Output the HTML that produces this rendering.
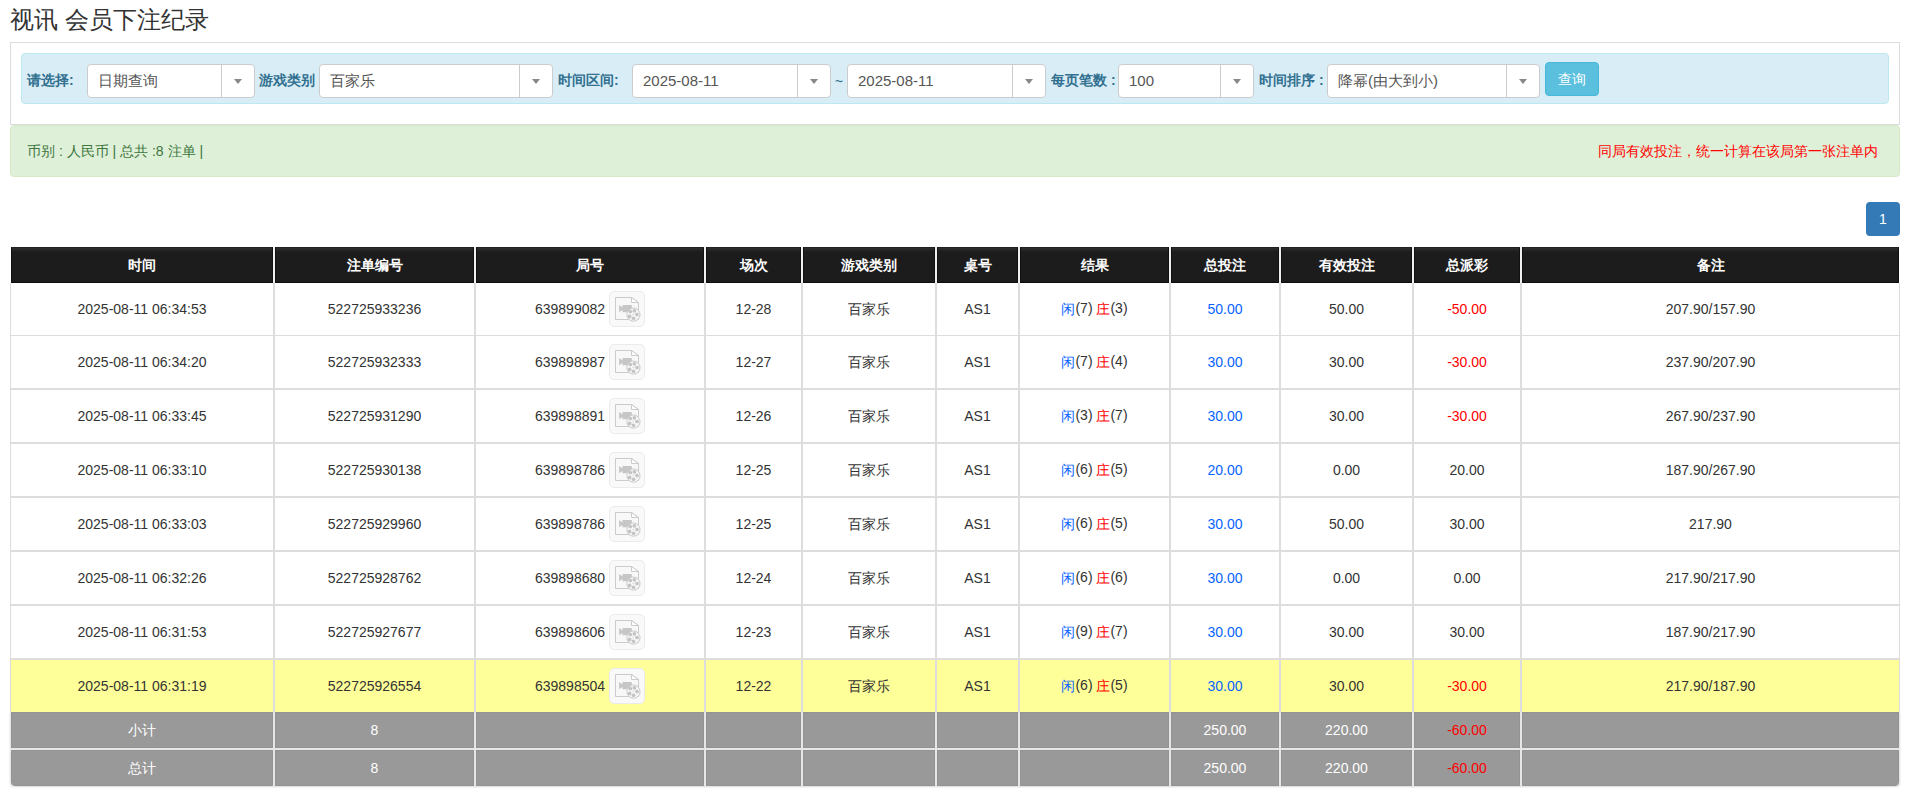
<!DOCTYPE html>
<html><head><meta charset="utf-8"><title>视讯 会员下注纪录</title>
<style>
*{box-sizing:border-box;}
html,body{margin:0;padding:0;background:#fff;}
body{font-family:"Liberation Sans",sans-serif;color:#333;font-size:14px;width:1914px;height:804px;position:relative;overflow:hidden;}
.ab{position:absolute;}
.title{left:10px;top:6px;font-size:24px;line-height:28px;color:#333;white-space:nowrap;}
.panel{left:10px;top:42px;width:1890px;height:83px;border:1px solid #ddd;background:#fff;}
.info{left:21px;top:53px;width:1868px;height:51px;border:1px solid #bce8f1;background:#d9edf7;border-radius:4px;}
.lbl{top:72px;font-size:14px;line-height:16px;font-weight:bold;color:#31708f;white-space:nowrap;}
.sel{top:64px;height:34px;border:1px solid #ccc;border-radius:4px;background:#fff;}
.sel .tx{position:absolute;left:10px;top:7px;font-size:15px;line-height:18px;color:#555;white-space:nowrap;}
.sel .dv{position:absolute;right:32px;top:0;bottom:0;width:1px;background:#ccc;}
.sel .ar{position:absolute;right:12px;top:14px;width:0;height:0;border-left:4px solid transparent;border-right:4px solid transparent;border-top:5px solid #888;}
.btn{left:1545px;top:62px;width:54px;height:34px;background:#5bc0de;border:1px solid #46b8da;border-radius:4px;color:#fff;font-size:14px;line-height:32px;text-align:center;}
.succ{left:10px;top:125px;width:1890px;height:52px;border:1px solid #d6e9c6;background:#dff0d8;border-radius:4px;}
.stx{top:142px;font-size:14px;line-height:18px;white-space:nowrap;}
.page{left:1866px;top:202px;width:34px;height:34px;background:#337ab7;border-radius:4px;color:#fff;font-size:14px;line-height:34px;text-align:center;}
.c{position:absolute;display:flex;align-items:center;justify-content:center;white-space:nowrap;font-size:14px;}
.hd{background:#1c1c1c;border:1px solid #111;border-top-color:#222;border-bottom-color:#0c0c0c;color:#fff;font-weight:bold;}
.hd:before{content:"";position:absolute;left:0;right:0;top:0;height:4px;background:linear-gradient(#2e2e2e,#1c1c1c);}
.hd span{position:relative;top:1px;}
.w{background:#fff;}
.y{background:#ffff99;}
.g{background:#999;border:1px solid #939393;color:#fff;}
.g .cj{position:relative;top:1px;}
.num{position:relative;top:1px;}
.bl{color:#0864ff;}
.rd{color:#ff0000;}
.cjb{position:relative;top:1px;}
.ico{display:inline-block;vertical-align:middle;width:36px;height:36px;margin-left:4px;border:1px solid #ebebeb;border-radius:5px;background:#f9f9f9;position:relative;}
.ico svg{position:absolute;left:-1px;top:-1px;}
</style></head><body>

<div class="ab title">视讯 会员下注纪录</div>
<div class="ab panel"></div>
<div class="ab info"></div>
<div class="ab lbl" style="left:27px">请选择:</div>
<div class="ab lbl" style="left:259px">游戏类别</div>
<div class="ab lbl" style="left:558px">时间区间:</div>
<div class="ab lbl" style="left:1051px">每页笔数 :</div>
<div class="ab lbl" style="left:1259px">时间排序 :</div>
<div class="ab lbl" style="left:835px;top:74px;font-size:17px;font-weight:normal;transform:scaleX(0.8);transform-origin:left">~</div>
<div class="ab sel" style="left:87px;width:168px"><div class="tx">日期查询</div><div class="dv"></div><div class="ar"></div></div>
<div class="ab sel" style="left:319px;width:234px"><div class="tx">百家乐</div><div class="dv"></div><div class="ar"></div></div>
<div class="ab sel" style="left:632px;width:199px"><div class="tx">2025-08-11</div><div class="dv"></div><div class="ar"></div></div>
<div class="ab sel" style="left:847px;width:199px"><div class="tx">2025-08-11</div><div class="dv"></div><div class="ar"></div></div>
<div class="ab sel" style="left:1118px;width:136px"><div class="tx">100</div><div class="dv"></div><div class="ar"></div></div>
<div class="ab sel" style="left:1327px;width:213px"><div class="tx">降幂(由大到小)</div><div class="dv"></div><div class="ar"></div></div>
<div class="ab btn">查询</div>
<div class="ab succ"></div>
<div class="ab stx" style="left:27px;color:#3c763d">币别 : 人民币 | 总共 :8 注单 |</div>
<div class="ab stx" style="right:36px;color:#ff0000">同局有效投注，统一计算在该局第一张注单内</div>
<div class="ab page">1</div>
<div class="ab" style="left:11px;top:247px;width:1888px;height:36px;background:#f0f0f0"></div>
<div class="c hd" style="left:11px;top:247px;width:262px;height:36px"><span>时间</span></div>
<div class="c hd" style="left:275px;top:247px;width:199px;height:36px"><span>注单编号</span></div>
<div class="c hd" style="left:476px;top:247px;width:228px;height:36px"><span>局号</span></div>
<div class="c hd" style="left:706px;top:247px;width:95px;height:36px"><span>场次</span></div>
<div class="c hd" style="left:803px;top:247px;width:132px;height:36px"><span>游戏类别</span></div>
<div class="c hd" style="left:937px;top:247px;width:81px;height:36px"><span>桌号</span></div>
<div class="c hd" style="left:1020px;top:247px;width:149px;height:36px"><span>结果</span></div>
<div class="c hd" style="left:1171px;top:247px;width:108px;height:36px"><span>总投注</span></div>
<div class="c hd" style="left:1281px;top:247px;width:131px;height:36px"><span>有效投注</span></div>
<div class="c hd" style="left:1414px;top:247px;width:106px;height:36px"><span>总派彩</span></div>
<div class="c hd" style="left:1522px;top:247px;width:377px;height:36px"><span>备注</span></div>
<div class="ab" style="left:10px;top:283px;width:1890px;height:429px;background:#ddd"></div>
<div class="c w" style="left:11px;top:283px;width:262px;height:52px"><span>2025-08-11 06:34:53</span></div>
<div class="c w" style="left:275px;top:283px;width:199px;height:52px"><span>522725933236</span></div>
<div class="c w" style="left:476px;top:283px;width:228px;height:52px"><span><span class="num">639899082</span><span class="ico"><svg width="36" height="36" viewBox="0 0 36 36"><path d="M6.5 28.5V6.5H22.5L29.5 11.5V28.5Z" fill="#f8f8f8" stroke="#cbcbcb" stroke-width="1"/><path d="M22.5 6.5V11.5H29.5Z" fill="#fff" stroke="#cbcbcb" stroke-width="1" stroke-linejoin="miter"/><path d="M10.1 14L13.45 16.4V14H22.8V21.3H13.45V19L10.1 21.3Z" fill="#c6c6c6"/><circle cx="24.45" cy="23.6" r="6.6" fill="#f6f6f6" stroke="#cbcbcb" stroke-width="1"/><circle cx="21.3" cy="20.5" r="1.85" fill="#c4c4c4"/><circle cx="25.4" cy="19.8" r="1.85" fill="#c4c4c4"/><circle cx="28" cy="23.5" r="1.85" fill="#c4c4c4"/><circle cx="24.5" cy="27.25" r="1.85" fill="#c4c4c4"/><circle cx="20.6" cy="25.4" r="1.85" fill="#c4c4c4"/><circle cx="24.1" cy="23.3" r="0.6" fill="#c6c6c6"/></svg></span></span></div>
<div class="c w" style="left:706px;top:283px;width:95px;height:52px"><span>12-28</span></div>
<div class="c w" style="left:803px;top:283px;width:132px;height:52px"><span><span class="cjb">百家乐</span></span></div>
<div class="c w" style="left:937px;top:283px;width:81px;height:52px"><span>AS1</span></div>
<div class="c w" style="left:1020px;top:283px;width:149px;height:52px"><span><span class="bl cjb">闲</span>(7) <span class="rd cjb">庄</span>(3)</span></div>
<div class="c w" style="left:1171px;top:283px;width:108px;height:52px"><span><span class="bl">50.00</span></span></div>
<div class="c w" style="left:1281px;top:283px;width:131px;height:52px"><span>50.00</span></div>
<div class="c w" style="left:1414px;top:283px;width:106px;height:52px"><span><span class="rd">-50.00</span></span></div>
<div class="c w" style="left:1522px;top:283px;width:377px;height:52px"><span>207.90/157.90</span></div>
<div class="c w" style="left:11px;top:336px;width:262px;height:52px"><span>2025-08-11 06:34:20</span></div>
<div class="c w" style="left:275px;top:336px;width:199px;height:52px"><span>522725932333</span></div>
<div class="c w" style="left:476px;top:336px;width:228px;height:52px"><span><span class="num">639898987</span><span class="ico"><svg width="36" height="36" viewBox="0 0 36 36"><path d="M6.5 28.5V6.5H22.5L29.5 11.5V28.5Z" fill="#f8f8f8" stroke="#cbcbcb" stroke-width="1"/><path d="M22.5 6.5V11.5H29.5Z" fill="#fff" stroke="#cbcbcb" stroke-width="1" stroke-linejoin="miter"/><path d="M10.1 14L13.45 16.4V14H22.8V21.3H13.45V19L10.1 21.3Z" fill="#c6c6c6"/><circle cx="24.45" cy="23.6" r="6.6" fill="#f6f6f6" stroke="#cbcbcb" stroke-width="1"/><circle cx="21.3" cy="20.5" r="1.85" fill="#c4c4c4"/><circle cx="25.4" cy="19.8" r="1.85" fill="#c4c4c4"/><circle cx="28" cy="23.5" r="1.85" fill="#c4c4c4"/><circle cx="24.5" cy="27.25" r="1.85" fill="#c4c4c4"/><circle cx="20.6" cy="25.4" r="1.85" fill="#c4c4c4"/><circle cx="24.1" cy="23.3" r="0.6" fill="#c6c6c6"/></svg></span></span></div>
<div class="c w" style="left:706px;top:336px;width:95px;height:52px"><span>12-27</span></div>
<div class="c w" style="left:803px;top:336px;width:132px;height:52px"><span><span class="cjb">百家乐</span></span></div>
<div class="c w" style="left:937px;top:336px;width:81px;height:52px"><span>AS1</span></div>
<div class="c w" style="left:1020px;top:336px;width:149px;height:52px"><span><span class="bl cjb">闲</span>(7) <span class="rd cjb">庄</span>(4)</span></div>
<div class="c w" style="left:1171px;top:336px;width:108px;height:52px"><span><span class="bl">30.00</span></span></div>
<div class="c w" style="left:1281px;top:336px;width:131px;height:52px"><span>30.00</span></div>
<div class="c w" style="left:1414px;top:336px;width:106px;height:52px"><span><span class="rd">-30.00</span></span></div>
<div class="c w" style="left:1522px;top:336px;width:377px;height:52px"><span>237.90/207.90</span></div>
<div class="c w" style="left:11px;top:390px;width:262px;height:52px"><span>2025-08-11 06:33:45</span></div>
<div class="c w" style="left:275px;top:390px;width:199px;height:52px"><span>522725931290</span></div>
<div class="c w" style="left:476px;top:390px;width:228px;height:52px"><span><span class="num">639898891</span><span class="ico"><svg width="36" height="36" viewBox="0 0 36 36"><path d="M6.5 28.5V6.5H22.5L29.5 11.5V28.5Z" fill="#f8f8f8" stroke="#cbcbcb" stroke-width="1"/><path d="M22.5 6.5V11.5H29.5Z" fill="#fff" stroke="#cbcbcb" stroke-width="1" stroke-linejoin="miter"/><path d="M10.1 14L13.45 16.4V14H22.8V21.3H13.45V19L10.1 21.3Z" fill="#c6c6c6"/><circle cx="24.45" cy="23.6" r="6.6" fill="#f6f6f6" stroke="#cbcbcb" stroke-width="1"/><circle cx="21.3" cy="20.5" r="1.85" fill="#c4c4c4"/><circle cx="25.4" cy="19.8" r="1.85" fill="#c4c4c4"/><circle cx="28" cy="23.5" r="1.85" fill="#c4c4c4"/><circle cx="24.5" cy="27.25" r="1.85" fill="#c4c4c4"/><circle cx="20.6" cy="25.4" r="1.85" fill="#c4c4c4"/><circle cx="24.1" cy="23.3" r="0.6" fill="#c6c6c6"/></svg></span></span></div>
<div class="c w" style="left:706px;top:390px;width:95px;height:52px"><span>12-26</span></div>
<div class="c w" style="left:803px;top:390px;width:132px;height:52px"><span><span class="cjb">百家乐</span></span></div>
<div class="c w" style="left:937px;top:390px;width:81px;height:52px"><span>AS1</span></div>
<div class="c w" style="left:1020px;top:390px;width:149px;height:52px"><span><span class="bl cjb">闲</span>(3) <span class="rd cjb">庄</span>(7)</span></div>
<div class="c w" style="left:1171px;top:390px;width:108px;height:52px"><span><span class="bl">30.00</span></span></div>
<div class="c w" style="left:1281px;top:390px;width:131px;height:52px"><span>30.00</span></div>
<div class="c w" style="left:1414px;top:390px;width:106px;height:52px"><span><span class="rd">-30.00</span></span></div>
<div class="c w" style="left:1522px;top:390px;width:377px;height:52px"><span>267.90/237.90</span></div>
<div class="c w" style="left:11px;top:444px;width:262px;height:52px"><span>2025-08-11 06:33:10</span></div>
<div class="c w" style="left:275px;top:444px;width:199px;height:52px"><span>522725930138</span></div>
<div class="c w" style="left:476px;top:444px;width:228px;height:52px"><span><span class="num">639898786</span><span class="ico"><svg width="36" height="36" viewBox="0 0 36 36"><path d="M6.5 28.5V6.5H22.5L29.5 11.5V28.5Z" fill="#f8f8f8" stroke="#cbcbcb" stroke-width="1"/><path d="M22.5 6.5V11.5H29.5Z" fill="#fff" stroke="#cbcbcb" stroke-width="1" stroke-linejoin="miter"/><path d="M10.1 14L13.45 16.4V14H22.8V21.3H13.45V19L10.1 21.3Z" fill="#c6c6c6"/><circle cx="24.45" cy="23.6" r="6.6" fill="#f6f6f6" stroke="#cbcbcb" stroke-width="1"/><circle cx="21.3" cy="20.5" r="1.85" fill="#c4c4c4"/><circle cx="25.4" cy="19.8" r="1.85" fill="#c4c4c4"/><circle cx="28" cy="23.5" r="1.85" fill="#c4c4c4"/><circle cx="24.5" cy="27.25" r="1.85" fill="#c4c4c4"/><circle cx="20.6" cy="25.4" r="1.85" fill="#c4c4c4"/><circle cx="24.1" cy="23.3" r="0.6" fill="#c6c6c6"/></svg></span></span></div>
<div class="c w" style="left:706px;top:444px;width:95px;height:52px"><span>12-25</span></div>
<div class="c w" style="left:803px;top:444px;width:132px;height:52px"><span><span class="cjb">百家乐</span></span></div>
<div class="c w" style="left:937px;top:444px;width:81px;height:52px"><span>AS1</span></div>
<div class="c w" style="left:1020px;top:444px;width:149px;height:52px"><span><span class="bl cjb">闲</span>(6) <span class="rd cjb">庄</span>(5)</span></div>
<div class="c w" style="left:1171px;top:444px;width:108px;height:52px"><span><span class="bl">20.00</span></span></div>
<div class="c w" style="left:1281px;top:444px;width:131px;height:52px"><span>0.00</span></div>
<div class="c w" style="left:1414px;top:444px;width:106px;height:52px"><span>20.00</span></div>
<div class="c w" style="left:1522px;top:444px;width:377px;height:52px"><span>187.90/267.90</span></div>
<div class="c w" style="left:11px;top:498px;width:262px;height:52px"><span>2025-08-11 06:33:03</span></div>
<div class="c w" style="left:275px;top:498px;width:199px;height:52px"><span>522725929960</span></div>
<div class="c w" style="left:476px;top:498px;width:228px;height:52px"><span><span class="num">639898786</span><span class="ico"><svg width="36" height="36" viewBox="0 0 36 36"><path d="M6.5 28.5V6.5H22.5L29.5 11.5V28.5Z" fill="#f8f8f8" stroke="#cbcbcb" stroke-width="1"/><path d="M22.5 6.5V11.5H29.5Z" fill="#fff" stroke="#cbcbcb" stroke-width="1" stroke-linejoin="miter"/><path d="M10.1 14L13.45 16.4V14H22.8V21.3H13.45V19L10.1 21.3Z" fill="#c6c6c6"/><circle cx="24.45" cy="23.6" r="6.6" fill="#f6f6f6" stroke="#cbcbcb" stroke-width="1"/><circle cx="21.3" cy="20.5" r="1.85" fill="#c4c4c4"/><circle cx="25.4" cy="19.8" r="1.85" fill="#c4c4c4"/><circle cx="28" cy="23.5" r="1.85" fill="#c4c4c4"/><circle cx="24.5" cy="27.25" r="1.85" fill="#c4c4c4"/><circle cx="20.6" cy="25.4" r="1.85" fill="#c4c4c4"/><circle cx="24.1" cy="23.3" r="0.6" fill="#c6c6c6"/></svg></span></span></div>
<div class="c w" style="left:706px;top:498px;width:95px;height:52px"><span>12-25</span></div>
<div class="c w" style="left:803px;top:498px;width:132px;height:52px"><span><span class="cjb">百家乐</span></span></div>
<div class="c w" style="left:937px;top:498px;width:81px;height:52px"><span>AS1</span></div>
<div class="c w" style="left:1020px;top:498px;width:149px;height:52px"><span><span class="bl cjb">闲</span>(6) <span class="rd cjb">庄</span>(5)</span></div>
<div class="c w" style="left:1171px;top:498px;width:108px;height:52px"><span><span class="bl">30.00</span></span></div>
<div class="c w" style="left:1281px;top:498px;width:131px;height:52px"><span>50.00</span></div>
<div class="c w" style="left:1414px;top:498px;width:106px;height:52px"><span>30.00</span></div>
<div class="c w" style="left:1522px;top:498px;width:377px;height:52px"><span>217.90</span></div>
<div class="c w" style="left:11px;top:552px;width:262px;height:52px"><span>2025-08-11 06:32:26</span></div>
<div class="c w" style="left:275px;top:552px;width:199px;height:52px"><span>522725928762</span></div>
<div class="c w" style="left:476px;top:552px;width:228px;height:52px"><span><span class="num">639898680</span><span class="ico"><svg width="36" height="36" viewBox="0 0 36 36"><path d="M6.5 28.5V6.5H22.5L29.5 11.5V28.5Z" fill="#f8f8f8" stroke="#cbcbcb" stroke-width="1"/><path d="M22.5 6.5V11.5H29.5Z" fill="#fff" stroke="#cbcbcb" stroke-width="1" stroke-linejoin="miter"/><path d="M10.1 14L13.45 16.4V14H22.8V21.3H13.45V19L10.1 21.3Z" fill="#c6c6c6"/><circle cx="24.45" cy="23.6" r="6.6" fill="#f6f6f6" stroke="#cbcbcb" stroke-width="1"/><circle cx="21.3" cy="20.5" r="1.85" fill="#c4c4c4"/><circle cx="25.4" cy="19.8" r="1.85" fill="#c4c4c4"/><circle cx="28" cy="23.5" r="1.85" fill="#c4c4c4"/><circle cx="24.5" cy="27.25" r="1.85" fill="#c4c4c4"/><circle cx="20.6" cy="25.4" r="1.85" fill="#c4c4c4"/><circle cx="24.1" cy="23.3" r="0.6" fill="#c6c6c6"/></svg></span></span></div>
<div class="c w" style="left:706px;top:552px;width:95px;height:52px"><span>12-24</span></div>
<div class="c w" style="left:803px;top:552px;width:132px;height:52px"><span><span class="cjb">百家乐</span></span></div>
<div class="c w" style="left:937px;top:552px;width:81px;height:52px"><span>AS1</span></div>
<div class="c w" style="left:1020px;top:552px;width:149px;height:52px"><span><span class="bl cjb">闲</span>(6) <span class="rd cjb">庄</span>(6)</span></div>
<div class="c w" style="left:1171px;top:552px;width:108px;height:52px"><span><span class="bl">30.00</span></span></div>
<div class="c w" style="left:1281px;top:552px;width:131px;height:52px"><span>0.00</span></div>
<div class="c w" style="left:1414px;top:552px;width:106px;height:52px"><span>0.00</span></div>
<div class="c w" style="left:1522px;top:552px;width:377px;height:52px"><span>217.90/217.90</span></div>
<div class="c w" style="left:11px;top:606px;width:262px;height:52px"><span>2025-08-11 06:31:53</span></div>
<div class="c w" style="left:275px;top:606px;width:199px;height:52px"><span>522725927677</span></div>
<div class="c w" style="left:476px;top:606px;width:228px;height:52px"><span><span class="num">639898606</span><span class="ico"><svg width="36" height="36" viewBox="0 0 36 36"><path d="M6.5 28.5V6.5H22.5L29.5 11.5V28.5Z" fill="#f8f8f8" stroke="#cbcbcb" stroke-width="1"/><path d="M22.5 6.5V11.5H29.5Z" fill="#fff" stroke="#cbcbcb" stroke-width="1" stroke-linejoin="miter"/><path d="M10.1 14L13.45 16.4V14H22.8V21.3H13.45V19L10.1 21.3Z" fill="#c6c6c6"/><circle cx="24.45" cy="23.6" r="6.6" fill="#f6f6f6" stroke="#cbcbcb" stroke-width="1"/><circle cx="21.3" cy="20.5" r="1.85" fill="#c4c4c4"/><circle cx="25.4" cy="19.8" r="1.85" fill="#c4c4c4"/><circle cx="28" cy="23.5" r="1.85" fill="#c4c4c4"/><circle cx="24.5" cy="27.25" r="1.85" fill="#c4c4c4"/><circle cx="20.6" cy="25.4" r="1.85" fill="#c4c4c4"/><circle cx="24.1" cy="23.3" r="0.6" fill="#c6c6c6"/></svg></span></span></div>
<div class="c w" style="left:706px;top:606px;width:95px;height:52px"><span>12-23</span></div>
<div class="c w" style="left:803px;top:606px;width:132px;height:52px"><span><span class="cjb">百家乐</span></span></div>
<div class="c w" style="left:937px;top:606px;width:81px;height:52px"><span>AS1</span></div>
<div class="c w" style="left:1020px;top:606px;width:149px;height:52px"><span><span class="bl cjb">闲</span>(9) <span class="rd cjb">庄</span>(7)</span></div>
<div class="c w" style="left:1171px;top:606px;width:108px;height:52px"><span><span class="bl">30.00</span></span></div>
<div class="c w" style="left:1281px;top:606px;width:131px;height:52px"><span>30.00</span></div>
<div class="c w" style="left:1414px;top:606px;width:106px;height:52px"><span>30.00</span></div>
<div class="c w" style="left:1522px;top:606px;width:377px;height:52px"><span>187.90/217.90</span></div>
<div class="c y" style="left:11px;top:660px;width:262px;height:52px"><span>2025-08-11 06:31:19</span></div>
<div class="c y" style="left:275px;top:660px;width:199px;height:52px"><span>522725926554</span></div>
<div class="c y" style="left:476px;top:660px;width:228px;height:52px"><span><span class="num">639898504</span><span class="ico"><svg width="36" height="36" viewBox="0 0 36 36"><path d="M6.5 28.5V6.5H22.5L29.5 11.5V28.5Z" fill="#f8f8f8" stroke="#cbcbcb" stroke-width="1"/><path d="M22.5 6.5V11.5H29.5Z" fill="#fff" stroke="#cbcbcb" stroke-width="1" stroke-linejoin="miter"/><path d="M10.1 14L13.45 16.4V14H22.8V21.3H13.45V19L10.1 21.3Z" fill="#c6c6c6"/><circle cx="24.45" cy="23.6" r="6.6" fill="#f6f6f6" stroke="#cbcbcb" stroke-width="1"/><circle cx="21.3" cy="20.5" r="1.85" fill="#c4c4c4"/><circle cx="25.4" cy="19.8" r="1.85" fill="#c4c4c4"/><circle cx="28" cy="23.5" r="1.85" fill="#c4c4c4"/><circle cx="24.5" cy="27.25" r="1.85" fill="#c4c4c4"/><circle cx="20.6" cy="25.4" r="1.85" fill="#c4c4c4"/><circle cx="24.1" cy="23.3" r="0.6" fill="#c6c6c6"/></svg></span></span></div>
<div class="c y" style="left:706px;top:660px;width:95px;height:52px"><span>12-22</span></div>
<div class="c y" style="left:803px;top:660px;width:132px;height:52px"><span><span class="cjb">百家乐</span></span></div>
<div class="c y" style="left:937px;top:660px;width:81px;height:52px"><span>AS1</span></div>
<div class="c y" style="left:1020px;top:660px;width:149px;height:52px"><span><span class="bl cjb">闲</span>(6) <span class="rd cjb">庄</span>(5)</span></div>
<div class="c y" style="left:1171px;top:660px;width:108px;height:52px"><span><span class="bl">30.00</span></span></div>
<div class="c y" style="left:1281px;top:660px;width:131px;height:52px"><span>30.00</span></div>
<div class="c y" style="left:1414px;top:660px;width:106px;height:52px"><span><span class="rd">-30.00</span></span></div>
<div class="c y" style="left:1522px;top:660px;width:377px;height:52px"><span>217.90/187.90</span></div>
<div class="ab" style="left:10px;top:712px;width:1890px;height:74px;background:#e6e6e6;border-radius:0 0 4px 4px;box-shadow:0 1px 2px rgba(0,0,0,.15)"></div>
<div class="c g" style="left:11px;top:712px;width:262px;height:36px;"><span><span class="cj">小计</span></span></div>
<div class="c g" style="left:275px;top:712px;width:199px;height:36px;"><span>8</span></div>
<div class="c g" style="left:476px;top:712px;width:228px;height:36px;"><span></span></div>
<div class="c g" style="left:706px;top:712px;width:95px;height:36px;"><span></span></div>
<div class="c g" style="left:803px;top:712px;width:132px;height:36px;"><span></span></div>
<div class="c g" style="left:937px;top:712px;width:81px;height:36px;"><span></span></div>
<div class="c g" style="left:1020px;top:712px;width:149px;height:36px;"><span></span></div>
<div class="c g" style="left:1171px;top:712px;width:108px;height:36px;"><span>250.00</span></div>
<div class="c g" style="left:1281px;top:712px;width:131px;height:36px;"><span>220.00</span></div>
<div class="c g" style="left:1414px;top:712px;width:106px;height:36px;"><span><span class="rd">-60.00</span></span></div>
<div class="c g" style="left:1522px;top:712px;width:377px;height:36px;"><span></span></div>
<div class="c g" style="left:11px;top:750px;width:262px;height:36px;border-bottom-left-radius:4px;"><span><span class="cj">总计</span></span></div>
<div class="c g" style="left:275px;top:750px;width:199px;height:36px;"><span>8</span></div>
<div class="c g" style="left:476px;top:750px;width:228px;height:36px;"><span></span></div>
<div class="c g" style="left:706px;top:750px;width:95px;height:36px;"><span></span></div>
<div class="c g" style="left:803px;top:750px;width:132px;height:36px;"><span></span></div>
<div class="c g" style="left:937px;top:750px;width:81px;height:36px;"><span></span></div>
<div class="c g" style="left:1020px;top:750px;width:149px;height:36px;"><span></span></div>
<div class="c g" style="left:1171px;top:750px;width:108px;height:36px;"><span>250.00</span></div>
<div class="c g" style="left:1281px;top:750px;width:131px;height:36px;"><span>220.00</span></div>
<div class="c g" style="left:1414px;top:750px;width:106px;height:36px;"><span><span class="rd">-60.00</span></span></div>
<div class="c g" style="left:1522px;top:750px;width:377px;height:36px;border-bottom-right-radius:4px;"><span></span></div>
</body></html>
